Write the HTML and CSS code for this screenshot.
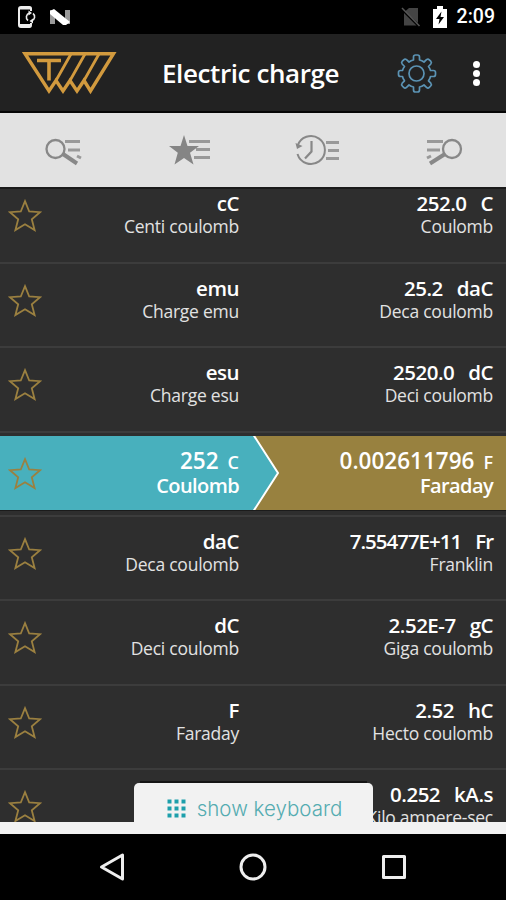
FILE: index.html
```
<!DOCTYPE html>
<html lang="en">
<head>
  <meta charset="UTF-8" />
  <meta name="viewport" content="width=device-width, initial-scale=1" />
  <title>Electric charge</title>
  <link rel="stylesheet" href="styles.css">
</head>
<body>

<!-- shared shapes -->
<svg class="defs" width="0" height="0">
  <symbol id="star" viewBox="0 0 34 34">
    <path d="M17 2.2 L21.2 12.5 L32 13.2 L23.8 20.2 L26.6 31 L17 25.2 L7.4 31 L10.200 20.2 L2 13.2 L12.800 12.5 Z" />
  </symbol>
</svg>

<div class="status-bar">
  <div class="status-left">
    <svg width="20" height="24" viewBox="0 0 20 24">
      <path d="M15 6V3.500Q15 2 13.500 2H5Q3 2 3 4V20Q3 22 5 22H13.500Q15 22 15 20V18" fill="none" stroke="#eee" stroke-width="2" />
      <path d="M3 19H15V22H3ZM3 2H15V4.500H3Z" fill="#eee" />
      <path d="M13.500 8A4.300 4.300 0 0 0 12 15.500M15.500 16A4.300 4.300 0 0 0 17 8.500" fill="none" stroke="#eee" stroke-width="1.600" />
      <path d="M12.500 5.500L16 8L12.500 10.500ZM17 13.500L13.500 16L17 18.500Z" fill="#eee" />
    </svg>
    <svg width="22" height="18" viewBox="0 0 22 18">
      <path d="M1 2H6V16H1ZM16 2H21V16H16Z" fill="#999" />
      <path d="M1 3L5 1L21 14L17 17H14L1 6Z" fill="#fff" />
    </svg>
  </div>
  <div class="status-right">
    <svg class="no-sim" width="20" height="20" viewBox="0 0 20 20">
      <path d="M8 1H17V16L4 4.500ZM3 6L15.500 18.500H3Z" fill="#444" />
      <path d="M1 1L18.500 19" stroke="#555" stroke-width="1.500" />
    </svg>
    <svg class="battery" width="14" height="22" viewBox="0 0 14 22">
      <path d="M0 3H4V0H10V3H14V22H0Z" fill="#fff" />
      <path d="M8.500 5.500L3 13H6.500L5.500 18.500L11 11H7.500Z" fill="#000" />
    </svg>
    <span class="clock">2:09</span>
  </div>
</div>

<header class="header">
  <svg class="logo" width="96" height="46" viewBox="0 0 96 46">
    <g fill="none" stroke="#d29a3e" stroke-width="3.400">
      <path d="M3 3.700H91.500L68.500 41L62 30.500L55 41L48 30.500L41 41L34 30.500L27 41Z" />
      <path d="M49 4L34 30.500M63 4L48 30.500M77 4L62 30.500" stroke-width="2.800" />
      <path d="M15 10.500H39M27 10.500V30.500" stroke-width="3.600" />
    </g>
  </svg>
  <h1>Electric charge</h1>
  <svg class="gear" width="40" height="40" viewBox="0 0 40 40">
    <g fill="none" stroke="#5b93b4" stroke-width="1.700" stroke-linejoin="round">
      <path d="M16.500 4Q16.500 2 18.500 2H20.500Q22.500 2 22.500 4V7Q25 7.500 27 9L29.500 6.700Q31 5.500 32.300 6.800L33.700 8.200Q35 9.500 33.800 11L31.500 13.500Q33 15.500 33.500 17.500H36.500Q38.500 17.500 38.500 19.500V21.500Q38.500 23.500 36.500 23.500H33.500Q33 26 31.500 27.800L33.800 30.200Q35 31.700 33.700 33L32.300 34.400Q31 35.700 29.500 34.300L27 32Q25 33.500 22.500 34V37Q22.500 39 20.500 39H18.500Q16.500 39 16.500 37V34Q14 33.500 12 32L9.500 34.300Q8 35.700 6.700 34.400L5.300 33Q4 31.700 5.200 30.200L7.500 27.800Q6 26 5.500 23.500H3.500Q1.500 23.500 1.500 21.500V19.500Q1.500 17.500 3.500 17.500H5.500Q6 15.500 7.500 13.500L5.200 11Q4 9.500 5.300 8.200L6.700 6.800Q8 5.500 9.500 6.700L12 9Q14 7.500 16.500 7Z" />
      <circle cx="19.500" cy="20.500" r="7.500" />
    </g>
  </svg>
  <div class="more"><i></i><i></i><i></i></div>
</header>

<nav class="tabs">
  <a class="tab">
    <svg width="44" height="36" viewBox="0 0 44 36">
      <path d="M24 9.500H39M27 18H39M36 24L40 26" stroke="#999" stroke-width="3" />
      <path d="M22 22L36 31.500" stroke="#888" stroke-width="4" />
      <circle cx="14.500" cy="17" r="9" fill="none" stroke="#888" stroke-width="2.300" />
    </svg>
  </a>
  <a class="tab">
    <svg width="44" height="36" viewBox="0 0 44 36">
      <path d="M21 9.500H42M28 17.500H42M26 25.500H42" stroke="#999" stroke-width="3" />
      <path d="M16 3L19.500 14H31L22 20.800L25.500 32.500L16 26L6.500 32.500L9.800 20.800L1 14H12.500Z" fill="#858585" />
    </svg>
  </a>
  <a class="tab">
    <svg width="46" height="36" viewBox="0 0 46 36">
      <path d="M33 10.500H46M35 18.500H46M33 26.500H46" stroke="#999" stroke-width="3" />
      <path d="M4.500 14A14 14 0 1 1 4.500 22" fill="none" stroke="#888" stroke-width="2" />
      <path d="M2.500 11L4 17L9.500 14Z" fill="#888" />
      <path d="M18.500 9V19.500L12 26.500" fill="none" stroke="#888" stroke-width="2.200" />
    </svg>
  </a>
  <a class="tab">
    <svg width="44" height="36" viewBox="0 0 44 36">
      <path d="M6 9.500H22M6 18H19M6 26L10 24" stroke="#999" stroke-width="3" />
      <path d="M24 22L9 31.500" stroke="#888" stroke-width="4" />
      <circle cx="31" cy="17" r="9" fill="none" stroke="#888" stroke-width="2.300" />
    </svg>
  </a>
</nav>

<main class="list">
  <div class="rows">
    <div class="row">
      <svg class="star"><use href="#star" /></svg>
      <div class="unit"><b>cC</b><span>Centi coulomb</span></div>
      <div class="unit result"><b>252.0<em>C</em></b><span>Coulomb</span></div>
    </div>
    <div class="row">
      <svg class="star"><use href="#star" /></svg>
      <div class="unit"><b>emu</b><span>Charge emu</span></div>
      <div class="unit result"><b>25.2<em>daC</em></b><span>Deca coulomb</span></div>
    </div>
    <div class="row">
      <svg class="star"><use href="#star" /></svg>
      <div class="unit"><b>esu</b><span>Charge esu</span></div>
      <div class="unit result"><b>2520.0<em>dC</em></b><span>Deci coulomb</span></div>
    </div>
    <div class="row selected">
      <div class="band">
        <svg class="arrow" width="30" height="74" viewBox="0 0 30 74">
          <path d="M0 0H3L27 37L3 74H0Z" fill="#48b0bd" />
          <path d="M2.500 -1L27 37L2.500 75" fill="none" stroke="#fff" stroke-width="2" />
        </svg>
        <svg class="star"><use href="#star" /></svg>
        <div class="unit"><b>252<em>C</em></b><span>Coulomb</span></div>
        <div class="unit result"><b>0.002611796<em>F</em></b><span>Faraday</span></div>
      </div>
    </div>
    <div class="row">
      <svg class="star"><use href="#star" /></svg>
      <div class="unit"><b>daC</b><span>Deca coulomb</span></div>
      <div class="unit result"><b class="tight">7.55477E+11<em>Fr</em></b><span>Franklin</span></div>
    </div>
    <div class="row">
      <svg class="star"><use href="#star" /></svg>
      <div class="unit"><b>dC</b><span>Deci coulomb</span></div>
      <div class="unit result"><b>2.52E-7<em>gC</em></b><span>Giga coulomb</span></div>
    </div>
    <div class="row">
      <svg class="star"><use href="#star" /></svg>
      <div class="unit"><b>F</b><span>Faraday</span></div>
      <div class="unit result"><b>2.52<em>hC</em></b><span>Hecto coulomb</span></div>
    </div>
    <div class="row">
      <svg class="star"><use href="#star" /></svg>
      <div class="unit"></div>
      <div class="unit result"><b>0.252<em>kA.s</em></b><span>Kilo ampere-sec</span></div>
    </div>
  </div>
</main>

<div class="keyboard-bar">
  <div class="keyboard-btn">
    <svg width="19" height="19" viewBox="0 0 19 19">
      <path d="M2.500 0.500V18.500M9.500 0.500V18.500M16.500 0.500V18.500" stroke="#1d9fab" stroke-width="4" stroke-dasharray="4 3" />
    </svg>
    <span>show keyboard</span>
  </div>
</div>

<div class="nav-bar">
  <svg width="28" height="30" viewBox="0 0 28 30"><path d="M24.500 3V27L3.500 15Z" /></svg>
  <svg width="28" height="30" viewBox="0 0 28 30"><circle cx="14" cy="15" r="12" /></svg>
  <svg width="28" height="30" viewBox="0 0 28 30"><path d="M3.500 4.500H24.500V25.500H3.500Z" /></svg>
</div>

</body>
</html>
```
FILE: styles.css
```
* {
  box-sizing: border-box;
}

body {
  margin: 0;
  width: 506px;
  height: 900px;
  overflow: hidden;
  background-color: #000;
  color: #fff;
  font-family: 'Open Sans', 'Noto Sans', sans-serif;
  display: flex;
  flex-direction: column;
}

svg {
  display: block;
  flex: none;
}

.defs {
  position: absolute;
}

.status-bar {
  height: 34px;
  flex: none;
  display: flex;
  justify-content: space-between;
  padding: 0 11px 0 16px;
}

.status-left,
.status-right {
  display: flex;
  align-items: center;
}

.status-left {
  gap: 13px;
}

.battery {
  margin: 0 10px 0 12px;
}

.clock {
  font-family: Roboto, sans-serif;
  font-size: 19.5px;
  font-weight: 500;
  line-height: 36px;
}

.header {
  height: 79px;
  flex: none;
  display: flex;
  align-items: center;
  padding: 0 26px 0 22px;
  background-color: #222;
  border-bottom: 2px solid #060606;
}

.header h1 {
  margin: 0 0 0 44px;
  width: 235px;
  font-size: 26px;
  font-weight: 600;
  line-height: 36px;
  letter-spacing: -0.4px;
  white-space: nowrap;
}

.more {
  margin-left: auto;
  padding-top: 2px;
  display: flex;
  flex-direction: column;
  gap: 2px;
}

.more i {
  width: 7px;
  height: 7px;
  border-radius: 50%;
  background-color: #fff;
}

.tabs {
  height: 74px;
  flex: none;
  display: flex;
  background-color: #e2e2e2;
}

.tab {
  flex: 1;
  display: flex;
  align-items: center;
  justify-content: center;
}

.list {
  height: 635px;
  flex: none;
  overflow: hidden;
  background-color: #2e2e2e;
  border-top: 2px solid #1b1b1b;
}

/* scrolled a little, the first row is cut by the tabs */
.rows {
  margin-top: -9.6px;
}

.row {
  height: 84.4px;
  display: flex;
  padding: 12px 13px 0 8px;
  border-bottom: 2px solid #3c3c3c;
}

.star {
  width: 34px;
  height: 34px;
  margin-top: 8px;
  fill: none;
  stroke: #9b8040;
  stroke-width: 1.8;
}

.unit {
  width: 197px;
  display: flex;
  flex-direction: column;
  align-items: flex-end;
  white-space: nowrap;
}

.result {
  flex: 1;
}

.unit b {
  font-size: 20.5px;
  font-weight: 600;
  line-height: 24px;
  letter-spacing: -0.5px;
}

.unit .tight {
  letter-spacing: -1px;
}

.unit em {
  font-style: normal;
  margin-left: 14px;
}

.unit span {
  font-size: 17.5px;
  line-height: 22px;
  letter-spacing: -0.25px;
  color: #e2e2e2;
}

.selected {
  padding: 3px 0 0;
}

.band {
  position: relative;
  width: 100%;
  height: 75px;
  display: flex;
  padding: 13px 13px 0 8px;
  background: linear-gradient(to right, #48b0bd 251px, #98813f 251px);
  border-bottom: 1px solid #1b1b1b;
}

.arrow {
  position: absolute;
  left: 251px;
  top: 0;
}

.band .unit b {
  font-size: 22.5px;
  letter-spacing: 0;
}

.band .unit em {
  font-size: 18px;
  margin-left: 9px;
}

.band .unit span {
  font-size: 20px;
  font-weight: 600;
  line-height: 24px;
  letter-spacing: -0.6px;
  color: #fff;
}

.keyboard-bar {
  height: 12px;
  flex: none;
  display: flex;
  justify-content: center;
  align-items: flex-end;
  background-color: #f2f2f2;
}

/* the tab rises over the last row */
.keyboard-btn {
  position: relative;
  width: 239px;
  height: 51px;
  flex: none;
  display: flex;
  align-items: center;
  justify-content: center;
  gap: 11px;
  padding-left: 3px;
  border-radius: 5px 5px 0 0;
  background-color: #f2f2f2;
  box-shadow: 0 -8px 0 -6px #151515;
}

.keyboard-btn span {
  font-family: Inter, 'Open Sans', sans-serif;
  font-size: 20.5px;
  font-weight: 300;
  color: #55acb1;
}

.nav-bar {
  flex: 1;
  display: flex;
  justify-content: center;
  align-items: center;
  gap: 113px;
}

.nav-bar svg {
  fill: none;
  stroke: #eee;
  stroke-width: 3;
  stroke-linejoin: round;
}
```
